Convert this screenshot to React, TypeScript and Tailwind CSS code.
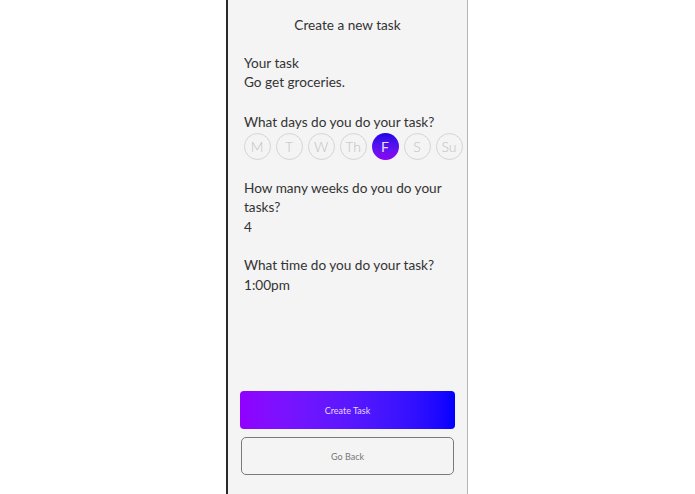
import React from 'react';

const days = ['M', 'T', 'W', 'Th', 'F', 'S', 'Su'];

export default function App() {
  return (
    <div
      className="flex h-[494px] w-full justify-center bg-white text-[#333]"
      style={{ fontFamily: 'Lato, "Noto Sans", sans-serif' }}
    >
      <div className="ml-[-1px] flex h-full w-[242px] flex-col border-l-2 border-r border-l-[#2a2a2a] border-r-[#b5b5b5] bg-[#f4f4f4] text-[13.6px] leading-[19px]">
        <h1 className="mt-[15.5px] text-center">Create a new task</h1>

        <div className="mt-[19px] px-[16px]">
          <p>Your task</p>
          <p>Go get groceries.</p>
        </div>

        <div className="mt-[21px] px-[16px]">
          <p>What days do you do your task?</p>
          <div className="ml-[-0.5px] mt-[1px] flex gap-[5px]">
            {days.map((d) =>
              d === 'F' ? (
                <span
                  key={d}
                  className="flex h-[27px] w-[27px] shrink-0 items-center justify-center rounded-full bg-gradient-to-b from-[#1a00e6] to-[#8a00f5] text-[14px] text-[#e8dcff]"
                >
                  {d}
                </span>
              ) : (
                <span
                  key={d}
                  className="flex h-[27px] w-[27px] shrink-0 items-center justify-center rounded-full border border-[#d4d4d4] text-[14px] font-light text-[#c0c0c0]"
                >
                  {d}
                </span>
              )
            )}
          </div>
        </div>

        <div className="mt-[19.5px] px-[16px]">
          <p>How many weeks do you do your tasks?</p>
          <p className="mt-[1px]">4</p>
        </div>

        <div className="mt-[19px] px-[16px]">
          <p>What time do you do your task?</p>
          <p className="mt-[1px]">1:00pm</p>
        </div>

        <div className="mb-[19px] mt-auto flex flex-col gap-[8px] px-[12px]">
          <button className="h-[38px] w-full rounded-[4px] bg-gradient-to-r from-[#9000ff] to-[#0000ff] text-[9px] text-[#e6d8ff]">
            Create Task
          </button>
          <button className="mx-[1px] h-[38px] rounded-[5px] border-[1.5px] border-[#7a7a7a] text-[9px] text-[#777]">
            Go Back
          </button>
        </div>
      </div>
    </div>
  );
}
